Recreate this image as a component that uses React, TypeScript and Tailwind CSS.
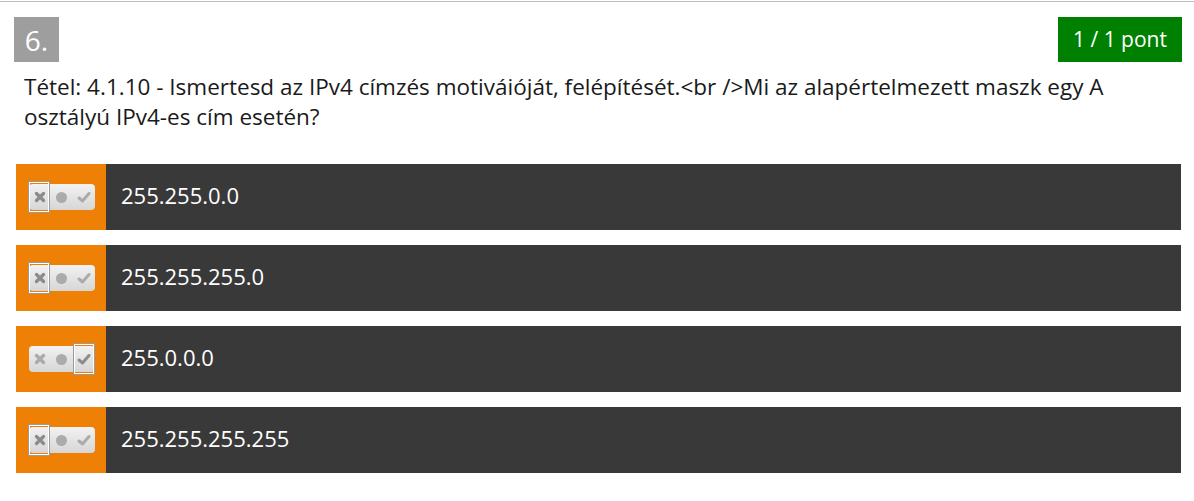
const answers = [
  { text: "255.255.0.0", selected: 0 },
  { text: "255.255.255.0", selected: 0 },
  { text: "255.0.0.0", selected: 2 },
  { text: "255.255.255.255", selected: 0 },
];

function Toggle({ selected }: { selected: number }) {
  const col = (i: number) => (i === selected ? "#8c8c8c" : "#ababab");
  return (
    <div className="relative w-[66px] h-[26px] rounded-[4px] bg-gradient-to-b from-[#f2f2f2] to-[#d6d6d6] flex items-center">
      {[0, 1, 2].map((i) => (
        <div key={i} className="w-[22px] h-full flex items-center justify-center">
          {i === 0 && (
            <svg width="12" height="12" viewBox="0 0 12 12">
              <path d="M2.5 2.5 L9.5 9.5 M9.5 2.5 L2.5 9.5" stroke={col(0)} strokeWidth="3.4" strokeLinecap="round" />
            </svg>
          )}
          {i === 1 && <div className="w-[11px] h-[11px] rounded-full" style={{ backgroundColor: col(1) }} />}
          {i === 2 && (
            <svg width="14" height="12" viewBox="0 0 14 12">
              <path d="M2 7 L5.5 10 L12 2.5" stroke={col(2)} strokeWidth="3" fill="none" strokeLinecap="round" strokeLinejoin="round" />
            </svg>
          )}
        </div>
      ))}
      <div
        className={
          "absolute top-[-3px] w-[22px] h-[32px] border border-[#9a9a9a] " +
          (selected === 0 ? "left-[-1px]" : selected === 1 ? "left-[21px]" : "left-[44px]")
        }
      >
        <div className="w-full h-full border border-white" />
      </div>
    </div>
  );
}

export default function App() {
  return (
    <div className="bg-white w-[1194px] h-[501px] pt-px" style={{ fontFamily: '"Open Sans", sans-serif' }}>
      <div className="border-t border-[#bdbdbd]">
        <div className="flex justify-between items-start pt-[15px] pl-[14px] pr-[12px]">
          <div className="w-[45px] h-[45px] bg-[#9e9e9e] text-white text-[28px] flex items-center justify-center">
            6.
          </div>
          <div className="w-[124px] h-[45px] bg-[#008000] text-white text-[21px] flex items-center justify-center">
            1 / 1 pont
          </div>
        </div>
        <div className="pl-[24px] pr-[70px] mt-[10px] text-[22.5px] leading-[30px] text-[#1a1a1a]">
          Tétel: 4.1.10 - Ismertesd az IPv4 címzés motiváióját, felépítését.&lt;br /&gt;Mi az alapértelmezett maszk egy A
          osztályú IPv4-es cím esetén?
        </div>
        <div className="flex flex-col gap-[15px] mt-[32px] pl-[16px] pr-[13px]">
          {answers.map((a) => (
            <div key={a.text} className="flex h-[66px]">
              <div className="w-[90px] bg-[#ed8005] flex items-center justify-center pl-[1px]">
                <Toggle selected={a.selected} />
              </div>
              <div className="flex-1 bg-[#393939] text-white text-[22px] flex items-center pl-[15px] pb-[4px]">{a.text}</div>
            </div>
          ))}
        </div>
      </div>
    </div>
  );
}
